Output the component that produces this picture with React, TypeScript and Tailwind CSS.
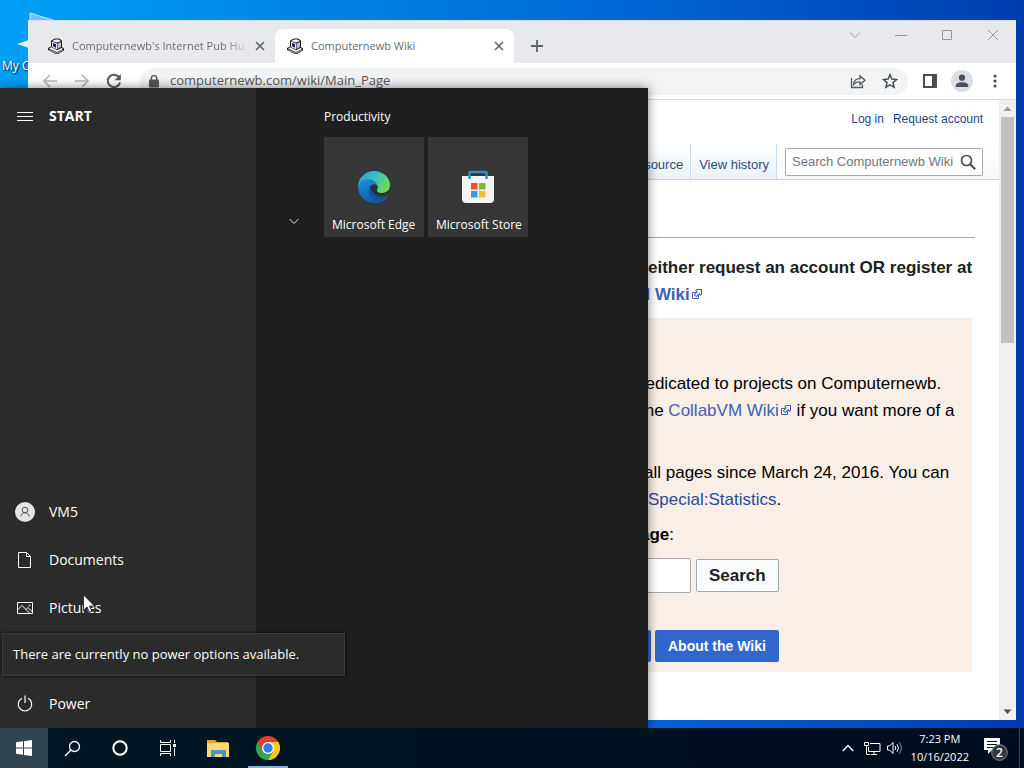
import type { ReactNode } from 'react';

/* ─── DATA ─── */

const tabs = [
  { title: "Computernewb's Internet Pub Hu", active: false },
  { title: 'Computernewb Wiki', active: true },
];

const tiles = [
  { label: 'Microsoft Edge', icon: <EdgeIcon /> },
  { label: 'Microsoft Store', icon: <StoreIcon /> },
];

const places = [
  { label: 'VM5', icon: <UserIcon /> },
  { label: 'Documents', icon: <DocumentIcon /> },
  { label: 'Pictures', icon: <PictureIcon /> },
];

/* ─── DESKTOP ─── */

export default function App() {
  return (
    <div className="relative flex h-screen flex-col overflow-hidden bg-linear-to-r from-[#00a0f6] via-[#0068d8] via-60% to-[#003cb0] font-['Open_Sans',sans-serif]">
      <div className="relative min-h-0 flex-1">
        <DesktopShortcut />
        <BrowserWindow />
        <StartMenu />
        <Cursor />
      </div>
      <Taskbar />
    </div>
  );
}

function DesktopShortcut() {
  return (
    <div className="absolute top-2 left-0 w-20">
      <svg viewBox="0 0 80 48" className="h-12 w-20" aria-hidden="true">
        <path d="M30 5l26 8v22H30z" fill="#6cc4f5" stroke="#bfe6fb" />
        <path d="M17 36l12-4v8z" fill="#e4eef5" />
      </svg>
      <p className="pl-[2px] text-xs leading-5 whitespace-nowrap text-white [text-shadow:1px_1px_2px_#000]">
        My Computer
      </p>
    </div>
  );
}

function Cursor() {
  return (
    <svg
      viewBox="0 0 12 19"
      className="absolute top-[594px] left-[83px] h-[19px] w-3"
      aria-hidden="true"
    >
      <path
        d="M.5.8v15.6l3.6-3.4 2.3 5.2 2.4-1-2.3-5.1h5z"
        fill="#fff"
        stroke="#111"
        strokeWidth=".8"
      />
    </svg>
  );
}

/* ─── BROWSER ─── */

function BrowserWindow() {
  return (
    <div className="absolute top-5 right-2 bottom-2 left-7 flex flex-col bg-white">
      <TabStrip />
      <Toolbar />
      <div className="flex min-h-0 flex-1">
        <WikiPage />
        <Scrollbar />
      </div>
    </div>
  );
}

function TabStrip() {
  return (
    <div className="flex h-[43px] items-end justify-between border-t border-[#d5dcea] bg-[#e8e9ed] pl-2">
      <div className="flex items-end">
        {tabs.map((tab) => (
          <div
            key={tab.title}
            className={`flex h-[34px] w-[239px] items-center rounded-t-lg pr-[9px] pl-3 ${
              tab.active ? 'bg-white' : ''
            }`}
          >
            <Favicon />
            <span
              className={`ml-2 flex-1 overflow-hidden text-[11px] whitespace-nowrap text-[#6b6e72] ${
                tab.active
                  ? ''
                  : '[mask-image:linear-gradient(to_right,#000_85%,transparent)]'
              }`}
            >
              {tab.title}
            </span>
            <button aria-label={`Close ${tab.title}`} className="ml-1">
              <svg viewBox="0 0 12 12" className="h-3 w-3" aria-hidden="true">
                <path d="M2 2l8 8M10 2l-8 8" stroke="#5f6368" strokeWidth="1.6" />
              </svg>
            </button>
          </div>
        ))}
        <button aria-label="New tab" className="ml-[17px] flex h-[34px] items-center">
          <svg viewBox="0 0 12 12" className="h-3 w-3" aria-hidden="true">
            <path d="M6 0v12M0 6h12" stroke="#5f6368" strokeWidth="1.8" />
          </svg>
        </button>
      </div>
      <div className="flex h-full gap-[34px] pt-2 pr-[17px]">
        <WindowButton label="Search tabs" path="M1 3.5l5 5 5-5" />
        <WindowButton label="Minimize" path="M0 6.5h12" />
        <WindowButton label="Maximize" path="M1.5 1.5h9v9h-9z" />
        <WindowButton label="Close" path="M1 1l10 10M11 1L1 11" />
      </div>
    </div>
  );
}

function WindowButton({ label, path }: { label: string; path: string }) {
  return (
    <button aria-label={label} className="h-3">
      <svg viewBox="0 0 12 12" className="h-3 w-3" aria-hidden="true">
        <path d={path} fill="none" stroke="#94969a" />
      </svg>
    </button>
  );
}

function Toolbar() {
  return (
    <div className="flex h-[37px] items-center border-b border-[#d9dbde] bg-white px-[14px]">
      <button aria-label="Back">
        <svg viewBox="0 0 16 16" className="h-4 w-4" aria-hidden="true">
          <path d="M15 8H2M8 2L2 8l6 6" fill="none" stroke="#b6b8ba" strokeWidth="1.7" />
        </svg>
      </button>
      <button aria-label="Forward" className="ml-4">
        <svg viewBox="0 0 16 16" className="h-4 w-4" aria-hidden="true">
          <path d="M1 8h13M8 2l6 6-6 6" fill="none" stroke="#b6b8ba" strokeWidth="1.7" />
        </svg>
      </button>
      <button aria-label="Reload" className="ml-4">
        <svg viewBox="0 0 16 16" className="h-4 w-4" aria-hidden="true">
          <path d="M13.2 4.6A6.2 6.2 0 1 0 14 9.4" fill="none" stroke="#55585c" strokeWidth="2" />
          <path d="M14.8 1v6.2H8.6z" fill="#55585c" />
        </svg>
      </button>
      <div className="ml-[18px] flex h-[27px] flex-1 items-center rounded-full bg-[#f1f3f4] pr-[10px] pl-[9px]">
        <svg viewBox="0 0 10 13" className="h-[13px] w-[10px]" aria-hidden="true">
          <rect y="4.5" width="10" height="8" rx="1" fill="#55585c" />
          <path d="M2.3 5V3.3a2.7 2.7 0 0 1 5.4 0V5" fill="none" stroke="#55585c" strokeWidth="1.4" />
        </svg>
        <input
          aria-label="Address"
          readOnly
          defaultValue="computernewb.com/wiki/Main_Page"
          className="ml-[11px] min-w-0 flex-1 bg-transparent text-[13px] text-[#55585c] outline-none"
        />
        <button aria-label="Share this page">
          <svg viewBox="0 0 16 16" className="h-4 w-4" aria-hidden="true">
            <path
              d="M1.5 5v9.500h11v-3M3.500 11.500c.5-4 3-5.800 6.500-5.800V3l5 4.300-5 4.200V8.800c-3 0-5 .7-6.500 2.700z"
              fill="none"
              stroke="#55585c"
              strokeWidth="1.300"
            />
          </svg>
        </button>
        <button aria-label="Bookmark this tab" className="ml-4">
          <svg viewBox="0 0 16 16" className="h-4 w-4" aria-hidden="true">
            <path
              d="M8 1.800l1.900 4.300 4.600.4-3.500 3.100 1.100 4.600L8 11.800l-4.100 2.400 1.100-4.600L1.500 6.500l4.600-.4z"
              fill="none"
              stroke="#4a4d51"
              strokeWidth="1.500"
            />
          </svg>
        </button>
      </div>
      <button aria-label="Side panel" className="ml-[15px]">
        <svg viewBox="0 0 14 14" className="h-[14px] w-[14px]" aria-hidden="true">
          <path d="M1 1h12v12H1z" fill="#fff" stroke="#4a4d51" strokeWidth="2" />
          <path d="M9 0h5v14H9z" fill="#4a4d51" />
        </svg>
      </button>
      <button aria-label="Profile" className="ml-[14px]">
        <svg viewBox="0 0 22 22" className="h-[22px] w-[22px]" aria-hidden="true">
          <circle cx="11" cy="11" r="11" fill="#dadfe6" />
          <circle cx="11" cy="7.700" r="3.100" fill="#4a5058" />
          <path d="M4.800 17v-1.500c0-2.200 3.300-3.300 6.200-3.300s6.200 1.100 6.200 3.300V17z" fill="#4a5058" />
        </svg>
      </button>
      <button aria-label="Menu" className="ml-[15px]">
        <svg viewBox="0 0 14 14" className="h-[14px] w-[14px]" aria-hidden="true">
          <g fill="#4a4d51">
            <circle cx="7" cy="2" r="1.600" />
            <circle cx="7" cy="7" r="1.600" />
            <circle cx="7" cy="12" r="1.600" />
          </g>
        </svg>
      </button>
    </div>
  );
}

function Scrollbar() {
  return (
    <div className="flex w-[17px] flex-col items-center bg-[#f0f0f1] pr-px">
      <svg viewBox="0 0 17 17" className="h-[17px] w-[17px]" aria-hidden="true">
        <path d="M4.500 11l4-4.500 4 4.500z" fill="#9a9a9a" />
      </svg>
      <div className="h-[226px] w-[13px] bg-[#bfc0c2]" />
      <div className="flex-1" />
      <svg viewBox="0 0 17 17" className="h-[17px] w-[17px]" aria-hidden="true">
        <path d="M4.500 6.500l4 4.500 4-4.500z" fill="#505050" />
      </svg>
    </div>
  );
}

/* ─── WIKI PAGE ─── */

function WikiPage() {
  return (
    <div className="flex min-w-0 flex-1 flex-col overflow-hidden bg-white font-['Liberation_Sans',Arial,sans-serif] text-[#202122]">
      <nav className="flex justify-end gap-[9px] pt-[9px] pr-4 text-xs leading-5 text-[#1f3f8f]">
        <a href="#login">Log in</a>
        <a href="#request">Request account</a>
      </nav>
      <div className="mt-[15px] flex h-9 justify-end border-b border-[#b9dcee] bg-linear-to-b from-white to-[#f6f9fb] pr-4 text-[13px] text-[#2c4a86]">
        <a
          href="#source"
          className="flex items-end border-r border-[#c5e0f3] bg-linear-to-b from-white to-[#e8f2f8] pr-[7px] pb-[5px]"
        >
          View source
        </a>
        <a
          href="#history"
          className="ml-px flex items-end border-r border-[#c5e0f3] bg-linear-to-b from-white to-[#e8f2f8] px-[7px] pb-[5px]"
        >
          View history
        </a>
        <form className="mt-1 ml-2 flex h-7 w-[198px] items-center rounded-xs border border-[#a2a9b1] bg-white px-[6px]">
          <input
            aria-label="Search wiki"
            placeholder="Search Computernewb Wiki"
            className="min-w-0 flex-1 outline-none placeholder:text-[#72777d]"
          />
          <button type="button" aria-label="Go">
            <svg viewBox="0 0 16 16" className="h-4 w-4" aria-hidden="true">
              <circle cx="6.500" cy="6.500" r="5" fill="none" stroke="#4a4d51" strokeWidth="1.700" />
              <path d="M10.200 10.200l5 5" stroke="#4a4d51" strokeWidth="2" />
            </svg>
          </button>
        </form>
      </div>

      <main className="mr-6 ml-[608px] text-[17px] leading-[27px] whitespace-nowrap">
        <div className="h-[58px] border-b border-[#a2a9b1]" />
        <div className="mt-4 font-bold">
          <p className="pl-3">either request an account OR register at</p>
          <p>
            <WikiLink>M Wiki</WikiLink>
          </p>
        </div>
        <section className="mt-[10px] mr-[3px] bg-[#f9efe6] pt-[52px] pb-[10px] text-black">
          <p>dedicated to projects on Computernewb.</p>
          <p className="pl-1">
            the <WikiLink>CollabVM Wiki</WikiLink> if you want more of a
          </p>
          <p className="mt-[35px] pl-2">all pages since March 24, 2016. You can</p>
          <p className="pl-3">
            <a href="#statistics" className="text-[#2a4b9b]">
              Special:Statistics
            </a>
            .
          </p>
          <p className="mt-2 pl-1">
            <b>age</b>:
          </p>
          <form className="mt-[10px] flex items-center gap-[5px]">
            <input
              aria-label="Page name"
              className="h-[35px] w-[55px] rounded-xs border border-[#a2a9b1] bg-white"
            />
            <button
              type="button"
              className="h-[33px] rounded-xs border border-[#a2a9b1] bg-[#fbfcfd] px-3 font-bold text-[#202122]"
            >
              Search
            </button>
          </form>
          <div className="mt-[37px] flex gap-1 text-sm font-bold text-white">
            <span className="h-8 w-[15px] rounded-xs bg-[#3366cc]" />
            <a href="#about" className="flex h-8 items-center rounded-xs bg-[#3366cc] px-[13px]">
              About the Wiki
            </a>
          </div>
        </section>
      </main>
    </div>
  );
}

function WikiLink({ children }: { children: ReactNode }) {
  return (
    <a href="#wiki" className="text-[#3f60b5]">
      {children}
      <svg viewBox="0 0 12 12" className="ml-px inline h-3 w-3 align-baseline" aria-hidden="true">
        <path d="M1.500 4.500h6v6h-6z" fill="#fff" stroke="#3f60b5" />
        <path
          d="M5.765 1H11v5.390L9.427 7.937l-1.310-1.310L5.393 9.350l-2.690-2.688 2.810-2.808L4.200 2.544z"
          fill="#3f60b5"
        />
        <path
          d="M9.995 2.004l.022 4.885L8.200 5.070 5.320 7.950 4.090 6.723l2.882-2.880-1.850-1.852z"
          fill="#fff"
        />
      </svg>
    </a>
  );
}

/* ─── START MENU ─── */

function StartMenu() {
  return (
    <div className="absolute top-[88px] bottom-0 left-0 flex w-[648px] bg-[#1f1f1f] text-white shadow-[0_0_10px_rgba(0,0,0,0.5)]">
      <div className="flex w-64 flex-col justify-between bg-[#2b2b2b]">
        <div className="flex h-14 items-center gap-4 pl-[17px]">
          <svg viewBox="0 0 16 9" className="h-[9px] w-4" aria-hidden="true">
            <path d="M0 .5h16M0 4.500h16M0 8.500h16" stroke="#fff" />
          </svg>
          <h1 className="text-sm font-bold">START</h1>
        </div>
        <div className="relative">
          {places.map((place) => (
            <StartRow key={place.label} label={place.label} icon={place.icon} />
          ))}
          <div className="h-12" />
          <StartRow label="Power" icon={<PowerIcon />} />
          <div
            role="tooltip"
            className="absolute bottom-[52px] left-[2px] flex h-[43px] w-[343px] items-center border border-[#3a3a3a] bg-[#2b2b2b] pl-[10px] text-[13px] whitespace-nowrap shadow-[0_0_3px_#000]"
          >
            There are currently no power options available.
          </div>
        </div>
      </div>
      <div className="flex flex-1 items-start pt-[18px] pl-8">
        <button aria-label="Collapse group" className="mt-[110px]">
          <svg viewBox="0 0 12 10" className="h-[10px] w-3" aria-hidden="true">
            <path d="M1.500 3L6 7.500 10.500 3" fill="none" stroke="#e6e6e6" />
          </svg>
        </button>
        <div className="ml-6">
          <h2 className="text-xs leading-[22px]">Productivity</h2>
          <div className="mt-[9px] flex gap-1">
            {tiles.map((tile) => (
              <button
                key={tile.label}
                className="flex h-[100px] w-[100px] flex-col justify-end bg-[#363636] pb-1 text-left text-xs whitespace-nowrap"
              >
                <span className="mb-3 flex h-9 w-full items-center justify-center">
                  {tile.icon}
                </span>
                <span className="pl-2">{tile.label}</span>
              </button>
            ))}
          </div>
        </div>
      </div>
    </div>
  );
}

function StartRow({ label, icon }: { label: string; icon: ReactNode }) {
  return (
    <button className="flex h-12 w-full items-center gap-[14px] pl-[15px] text-sm">
      {icon}
      {label}
    </button>
  );
}

/* ─── TASKBAR ─── */

function Taskbar() {
  return (
    <div className="relative flex h-10 items-center justify-between bg-linear-to-r from-[#001823] to-[#000d1e] text-white">
      <div className="flex h-full">
        <button aria-label="Start" className="flex w-12 items-center justify-center bg-[#30454f]">
          <svg viewBox="0 0 16 16" className="h-4 w-4" aria-hidden="true">
            <path d="M0 2.300l7-1v6.300H0zM8 1.200L16 0v7.600H8zM0 8.500h7v6.300l-7-1zM8 8.500h8V16l-8-1.100z" fill="#fff" />
          </svg>
        </button>
        <button aria-label="Search" className="flex w-12 items-center justify-center">
          <svg viewBox="0 0 17 17" className="h-[17px] w-[17px]" aria-hidden="true">
            <circle cx="10.500" cy="6.500" r="5" fill="none" stroke="#fff" strokeWidth="1.300" />
            <path d="M7 10L1 16" stroke="#fff" strokeWidth="1.400" />
          </svg>
        </button>
        <button aria-label="Cortana" className="flex w-12 items-center justify-center">
          <svg viewBox="0 0 16 16" className="h-4 w-4" aria-hidden="true">
            <circle cx="8" cy="8" r="6.700" fill="none" stroke="#fff" strokeWidth="2" />
          </svg>
        </button>
        <button aria-label="Task view" className="flex w-12 items-center justify-center">
          <svg viewBox="0 0 16 16" className="h-4 w-4" aria-hidden="true">
            <path
              d="M.5 0v2.500h10V0M.5 16v-2.500h10V16M.5 4.500h10v7H.5zM14.500 0v3M14.500 8v8"
              fill="none"
              stroke="#fff"
            />
            <path d="M13 4h3v3h-3z" fill="#fff" />
          </svg>
        </button>
        <button aria-label="File Explorer" className="ml-[2px] flex w-12 items-center justify-center">
          <svg viewBox="0 0 22 19" className="h-[19px] w-[22px]" aria-hidden="true">
            <path d="M0 1h8l2 2h11v3H0z" fill="#e3a32c" />
            <path d="M0 4h22v14H0z" fill="#f9d978" />
            <path d="M4 18v-7h15v7h-4v-3H8v3z" fill="#4b93c8" />
          </svg>
        </button>
        <button
          aria-label="Google Chrome"
          className="ml-[2px] flex w-12 flex-col items-center"
        >
          <span className="flex flex-1 items-center pt-[2px]">
            <ChromeIcon />
          </span>
          <span className="h-[2px] w-10 bg-[#76b5e5]" />
        </button>
      </div>

      <div className="mr-1 flex h-full items-center border-r border-[#3a4450]">
        <svg viewBox="0 0 12 8" className="h-2 w-3" aria-hidden="true">
          <path d="M.7 7L6 1.500 11.300 7" fill="none" stroke="#fff" strokeWidth="1.300" />
        </svg>
        <svg viewBox="0 0 17 15" className="ml-[10px] h-[15px] w-[17px]" aria-hidden="true">
          <path d="M6 2.500h10v8H4.500V6M7 13.500h6M10 10.500v3" fill="none" stroke="#fff" />
          <path d="M.5 1.500h4v3h-4zM2.500 5v8.500H6" fill="none" stroke="#fff" />
        </svg>
        <svg viewBox="0 0 16 14" className="ml-[6px] h-[14px] w-4" aria-hidden="true">
          <path d="M.5 5h2L6 1.500v11L2.500 9h-2zM8 5q1.500 2 0 4M10 3.200q3 3.800 0 7.600" fill="none" stroke="#fff" />
          <path d="M12.200 1.500q4.300 5.500 0 11" fill="none" stroke="#8b949c" />
        </svg>
        <div className="ml-2 text-center text-[11px] leading-[18px]">
          <p>7:23 PM</p>
          <p>10/16/2022</p>
        </div>
        <button aria-label="2 new notifications" className="mr-[11px] ml-[14px]">
          <svg viewBox="0 0 25 25" className="h-[25px] w-[25px]" aria-hidden="true">
            <path d="M1 2h16v12H9l-4 4v-4H1z" fill="#fff" />
            <path d="M4 5.500h10M4 8.500h10M4 11.500h6" stroke="#06121f" />
            <circle cx="16.500" cy="16.500" r="7.800" fill="#32383f" stroke="#858b91" />
            <text x="16.500" y="21" textAnchor="middle" fontSize="12" fontWeight="600" fill="#fff">
              2
            </text>
          </svg>
        </button>
      </div>
    </div>
  );
}

/* ─── ICONS ─── */

function Favicon() {
  return (
    <svg viewBox="0 0 16 16" className="h-4 w-4 shrink-0" aria-hidden="true">
      <path
        d="M3 2.500L7 .5h4l3 2V9l2 1.500v2L10 16H8L0 12v-2l3-1.500z"
        fill="#1a1a1a"
      />
      <path d="M4 3l3.500-1.500h3L13 3 9 4.500z" fill="#fff" />
      <path d="M4 3.500L9 5.500v6L4 9z" fill="#e9e9ee" />
      <path d="M5 5l3 1.300v3.400L5 8.200z" fill="#17177a" />
      <path d="M9.500 5.500L13 4v5l-3.500 2z" fill="#bdbdc0" />
      <path d="M1 10.500l2.500-1.200L9 12.200l4.500-2.200 1.500 1L9 14z" fill="#fafafa" />
      <path d="M1.200 11.800L9 15.200l5.800-3" fill="none" stroke="#c4c4c4" strokeWidth=".9" />
    </svg>
  );
}

function EdgeIcon() {
  return (
    <svg viewBox="0 0 34 34" className="h-[34px] w-[34px]" aria-hidden="true">
      <defs>
        <linearGradient id="edge-top" x1="0" y1="0" x2="1" y2=".5">
          <stop offset="0" stopColor="#279fd8" />
          <stop offset=".5" stopColor="#35c1c8" />
          <stop offset="1" stopColor="#68dc52" />
        </linearGradient>
        <linearGradient id="edge-left" x1="0" y1="0" x2=".4" y2="1">
          <stop offset="0" stopColor="#1b96dc" />
          <stop offset="1" stopColor="#0c5cae" />
        </linearGradient>
      </defs>
      <path
        d="M1 17C1 8 8 1 17 1s16 6.500 16 14c0 5-3.500 8-8 8-4 0-5.500-1.500-5-3 2-3 .5-7-4-7C10 12 3 12 1 17z"
        fill="url(#edge-top)"
      />
      <path d="M1 17c1-6 6-8 10-8 5 0 9 3 9.500 7-2-3-8-2-8 4 0 7 6 11 12 12C13 36 1 29 1 17z" fill="url(#edge-left)" />
      <path d="M13 16c-4 7 2 16 12 16 2.500-1 5-3.500 6.500-6.500-3 2-6 2-9 1-5-1-9-5-9.500-10.500z" fill="#0f569f" />
      <path d="M14.500 18c0-3 5.500-3 5.500 0 0 1-.7 1.500-.5 2.500.3 2 3 3 6 2.700 2.500-.2 4.500-1.200 6-2.700l.5 1.500c-4 4-12 4.500-15.500 0-1.300-1.500-2-2.500-2-4z" fill="#23313a" />
    </svg>
  );
}

function StoreIcon() {
  return (
    <svg viewBox="0 0 32 34" className="h-[34px] w-8" aria-hidden="true">
      <path d="M0 6h32v23a4 4 0 0 1-4 4H4a4 4 0 0 1-4-4z" fill="#f4f4f4" />
      <path d="M7.500 9V3a1 1 0 0 1 1-1h15a1 1 0 0 1 1 1v6" fill="none" stroke="#2a8fd2" strokeWidth="2.500" />
      <path d="M9 13h6.500v6.500H9z" fill="#e8532b" />
      <path d="M17 13h6.500v6.500H17z" fill="#82b92c" />
      <path d="M9 21h6.500v6.500H9z" fill="#2aa0e8" />
      <path d="M17 21h6.500v6.500H17z" fill="#f9bb24" />
    </svg>
  );
}

function UserIcon() {
  return (
    <svg viewBox="0 0 20 20" className="h-5 w-5" aria-hidden="true">
      <circle cx="10" cy="10" r="10" fill="#e4e4e4" />
      <circle cx="10" cy="8" r="2.800" fill="none" stroke="#555" />
      <path d="M5.800 14.500c0-5 8.400-5 8.400 0" fill="none" stroke="#555" />
    </svg>
  );
}

function DocumentIcon() {
  return (
    <svg viewBox="0 0 20 20" className="h-5 w-5" aria-hidden="true">
      <path d="M3.500 2.500h8l4 4v11h-12zM11.500 2.500v4h4" fill="none" stroke="#fff" />
    </svg>
  );
}

function PictureIcon() {
  return (
    <svg viewBox="0 0 20 20" className="h-5 w-5" aria-hidden="true">
      <path d="M2.500 4.500h15v11h-15zM2.500 12l4.500-4.500 8 8M11 11.500l2-2 4.500 4.500" fill="none" stroke="#fff" />
      <circle cx="14.500" cy="7.500" r=".8" fill="#fff" />
    </svg>
  );
}

function PowerIcon() {
  return (
    <svg viewBox="0 0 20 20" className="h-5 w-5" aria-hidden="true">
      <path d="M7 4.300a6.700 6.700 0 1 0 6 0M10 1.500V9" fill="none" stroke="#fff" strokeWidth="1.200" />
    </svg>
  );
}

function ChromeIcon() {
  return (
    <svg viewBox="0 0 24 24" className="h-6 w-6" aria-hidden="true">
      <path d="M12 12L1.600 6A12 12 0 0 0 12 24l5.200-9z" fill="#2da94f" />
      <path d="M12 6h10.400A12 12 0 0 1 12 24l5.200-9z" fill="#fdc91f" />
      <path d="M12 6h10.400A12 12 0 0 0 1.600 6l5.200 9z" fill="#e33b2e" />
      <circle cx="12" cy="12" r="6" fill="#fff" />
      <circle cx="12" cy="12" r="4.700" fill="#2f7de9" />
    </svg>
  );
}
